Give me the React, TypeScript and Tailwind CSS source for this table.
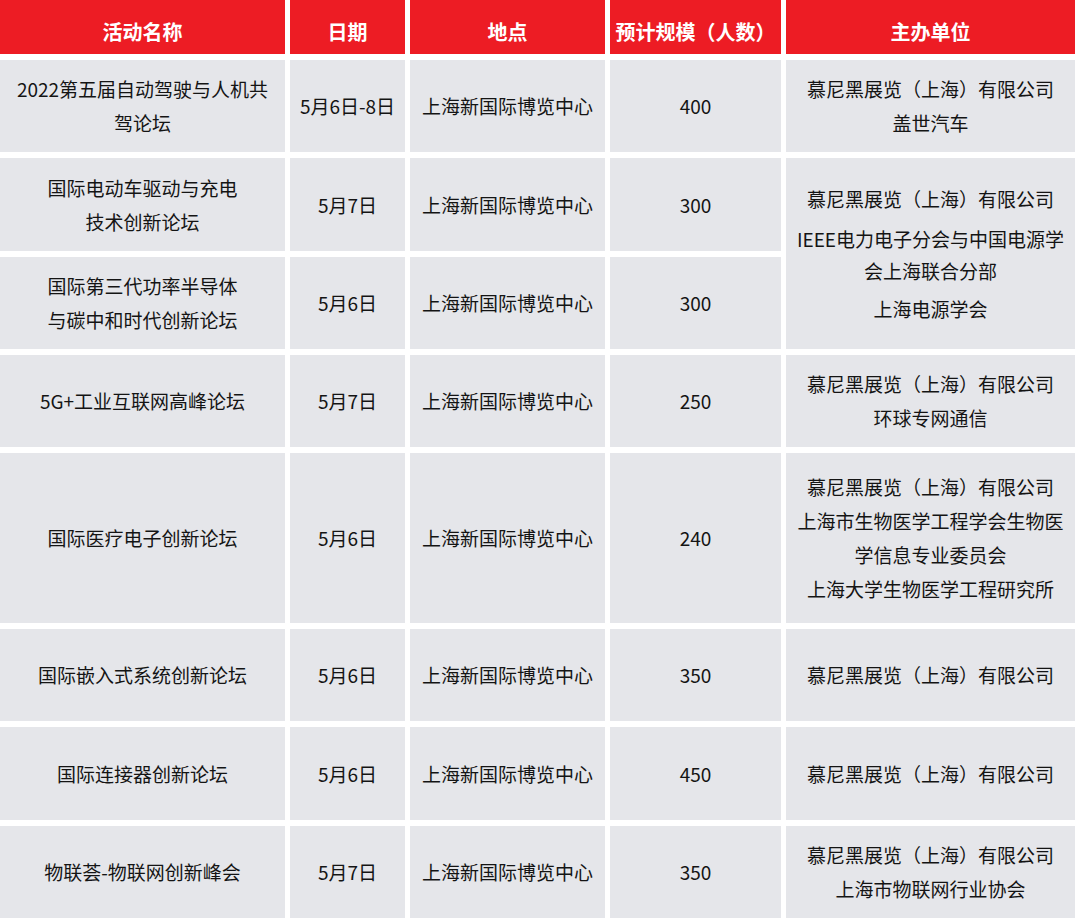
const headers = ["活动名称", "日期", "地点", "预计规模（人数）", "主办单位"];

type Row = {
  name: string[];
  date: string;
  place: string;
  size: string;
  org?: string[][]; // paragraphs -> lines; undefined when merged with the row above
};

const MNH = "慕尼黑展览（上海）有限公司";

const rows: Row[] = [
  { name: ["2022第五届自动驾驶与人机共", "驾论坛"], date: "5月6日-8日", place: "上海新国际博览中心", size: "400", org: [[MNH, "盖世汽车"]] },
  { name: ["国际电动车驱动与充电", "技术创新论坛"], date: "5月7日", place: "上海新国际博览中心", size: "300", org: [[MNH], ["IEEE电力电子分会与中国电源学", "会上海联合分部"], ["上海电源学会"]] },
  { name: ["国际第三代功率半导体", "与碳中和时代创新论坛"], date: "5月6日", place: "上海新国际博览中心", size: "300" },
  { name: ["5G+工业互联网高峰论坛"], date: "5月7日", place: "上海新国际博览中心", size: "250", org: [[MNH, "环球专网通信"]] },
  { name: ["国际医疗电子创新论坛"], date: "5月6日", place: "上海新国际博览中心", size: "240", org: [[MNH, "上海市生物医学工程学会生物医", "学信息专业委员会", "上海大学生物医学工程研究所"]] },
  { name: ["国际嵌入式系统创新论坛"], date: "5月6日", place: "上海新国际博览中心", size: "350", org: [[MNH]] },
  { name: ["国际连接器创新论坛"], date: "5月6日", place: "上海新国际博览中心", size: "450", org: [[MNH]] },
  { name: ["物联荟-物联网创新峰会"], date: "5月7日", place: "上海新国际博览中心", size: "350", org: [[MNH, "上海市物联网行业协会"]] },
];

function Cell({ children, className = "" }: { children: React.ReactNode; className?: string }) {
  return (
    <div className={`flex flex-col items-center justify-center bg-[#e5e6ea] text-center text-[19px] leading-[34px] text-[#141414] ${className}`}>
      {children}
    </div>
  );
}

export default function App() {
  return (
    <div className="h-[922px] w-[1075px] bg-white font-['Noto_Sans_CJK_SC','Noto_Sans',sans-serif]">
      <div className="grid grid-cols-[285px_115px_195px_171px_289px] grid-rows-[54px_92px_93px_92px_92px_170px_92px_93px_92px] gap-x-[5px] gap-y-[6px]">
        {headers.map((h) => (
          <div key={h} className="flex items-center justify-center bg-[#ed1c24] pt-[10px] text-[20px] font-bold whitespace-nowrap text-white">
            {h}
          </div>
        ))}

        {rows.map((r, i) => (
          <>
            <Cell key={`n${i}`}>
              {r.name.map((l) => (
                <span key={l} className="whitespace-nowrap">{l}</span>
              ))}
            </Cell>
            <Cell key={`d${i}`}>{r.date}</Cell>
            <Cell key={`p${i}`}>{r.place}</Cell>
            <Cell key={`s${i}`}>{r.size}</Cell>
            {r.org && (
              <Cell key={`o${i}`} className={r.org.length > 1 ? "row-span-2" : ""}>
                {r.org.map((para, j) => (
                  <div key={j} className={r.org!.length > 1 ? (j === 1 ? "mt-[8px] leading-[32px]" : j === 2 ? "mt-[6px] leading-[32px]" : "leading-[32px]") : ""}>
                    {para.map((l) => (
                      <div key={l} className="whitespace-nowrap">{l}</div>
                    ))}
                  </div>
                ))}
              </Cell>
            )}
          </>
        ))}
      </div>
    </div>
  );
}
